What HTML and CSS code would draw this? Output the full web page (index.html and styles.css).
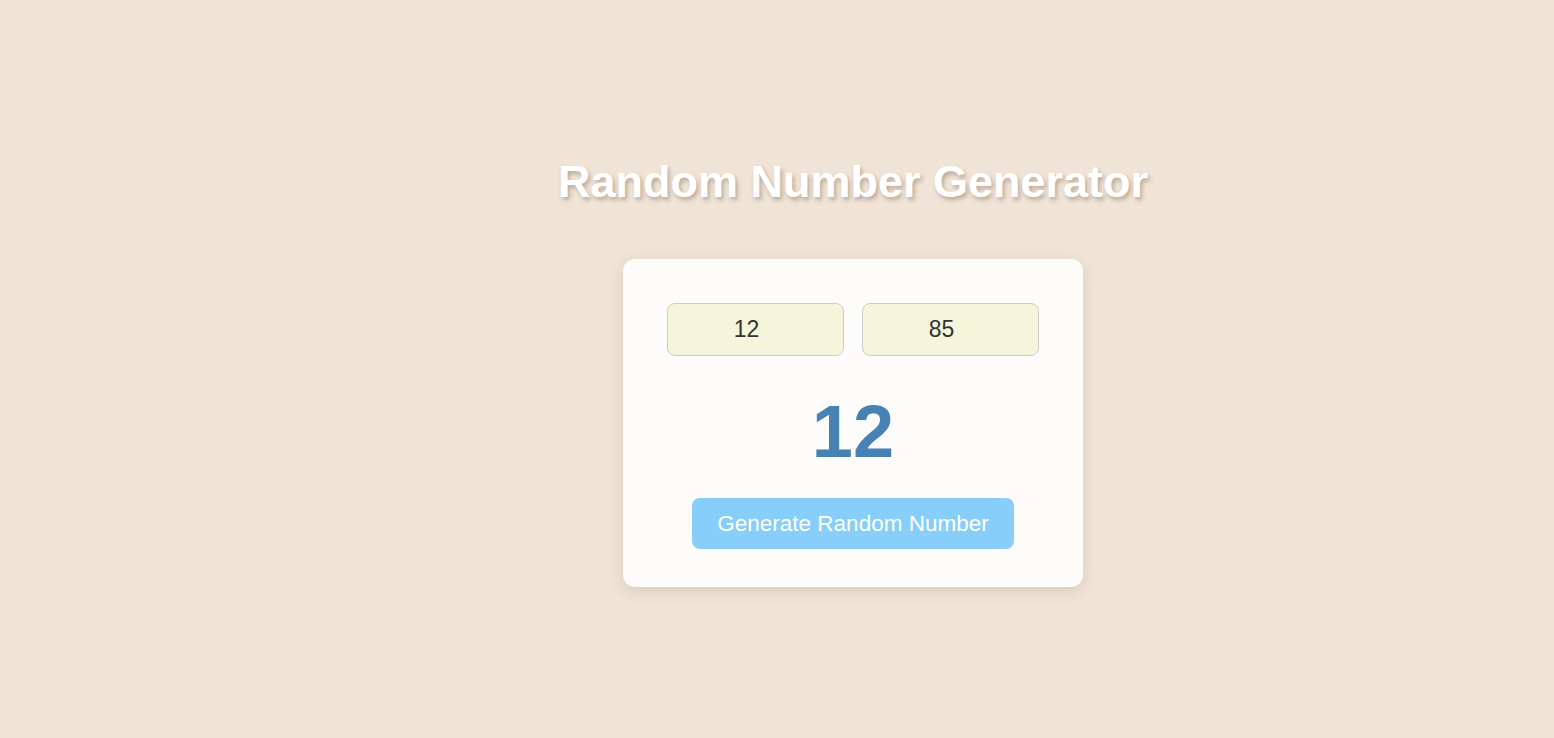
FILE: index.html
```html
<!DOCTYPE html>
<html>
<head>
<meta charset="utf-8">
<link rel="stylesheet" href="styles.css">
</head>
<body>
<main class="page">
  <h1 class="title">Random Number Generator</h1>
  <section class="card">
    <div class="inputs">
      <input class="range-input" type="number" value="12">
      <input class="range-input" type="number" value="85">
    </div>
    <div class="result">12</div>
    <button class="generate">Generate Random Number</button>
  </section>
</main>
</body>
</html>
```
FILE: styles.css
```css
html, body {
  margin: 0;
  padding: 0;
  height: 100%;
}
body {
  background: #f0e4d7;
  font-family: "Liberation Sans", Arial, sans-serif;
}
.page {
  display: flex;
  flex-direction: column;
  align-items: center;
  padding-left: 152px;
  padding-top: 156px;
}
.title {
  margin: 0;
  font-size: 45px;
  font-weight: bold;
  color: #ffffff;
  text-shadow: 2px 3px 4px rgba(90, 60, 30, 0.35);
  line-height: 52px;
}
.card {
  margin-top: 51px;
  width: 460px;
  box-sizing: border-box;
  padding: 44px 44px 38px;
  background: #fdfcfa;
  border-radius: 12px;
  box-shadow: 0 4px 14px rgba(120, 90, 60, 0.18);
  display: flex;
  flex-direction: column;
  align-items: center;
}
.inputs {
  display: flex;
  gap: 18px;
  width: 100%;
}
.range-input {
  flex: 1;
  min-width: 0;
  height: 53px;
  box-sizing: border-box;
  background: #f5f5dc;
  border: 1px solid #cccccc;
  border-radius: 8px;
  font-family: "Liberation Sans", Arial, sans-serif;
  font-size: 23px;
  color: #333333;
  text-align: center;
  padding: 0 18px 0 0;
  -moz-appearance: textfield;
}
.range-input::-webkit-outer-spin-button,
.range-input::-webkit-inner-spin-button {
  -webkit-appearance: none;
  margin: 0;
}
.result {
  margin-top: 31px;
  font-size: 74px;
  font-weight: bold;
  color: #4682b4;
  line-height: 90px;
}
.generate {
  margin-top: 21px;
  height: 51px;
  padding: 0 25px;
  background: #87cefa;
  border: none;
  border-radius: 8px;
  color: #ffffff;
  font-family: "Liberation Sans", Arial, sans-serif;
  font-size: 22.5px;
  cursor: pointer;
}
```
